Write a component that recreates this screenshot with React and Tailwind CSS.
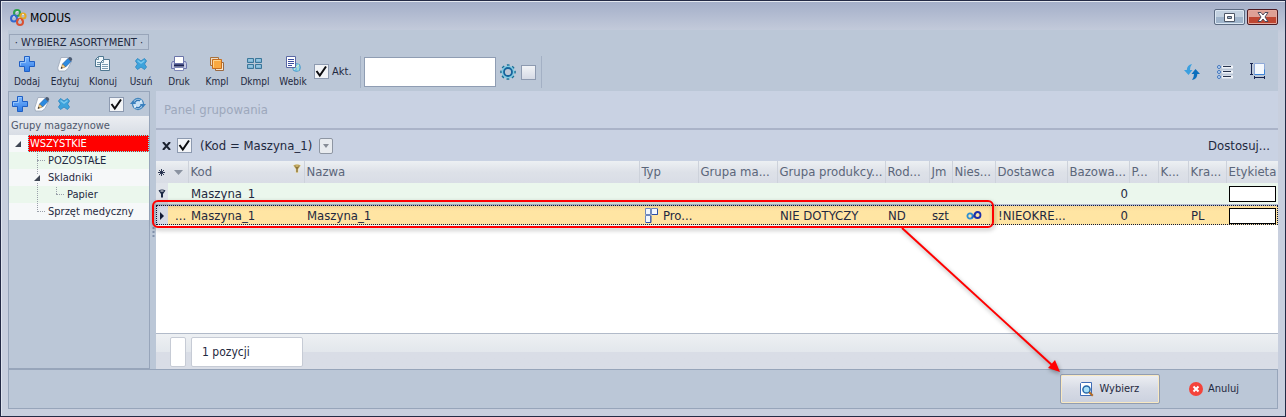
import React from 'react';

const Plus = () => (
  <svg width="16" height="16" viewBox="0 0 16 16" aria-hidden="true">
    <defs>
      <linearGradient id="plusFill" x1="0" y1="0" x2="0" y2="1">
        <stop offset="0" stopColor="#7db8ff" />
        <stop offset="1" stopColor="#2f7be6" />
      </linearGradient>
    </defs>
    <path d="M5.500.5h5v5h5v5h-5v5h-5v-5h-5v-5h5z" fill="url(#plusFill)" stroke="#1f5fc4" />
    <path d="M6.500 6.500v-5h3M1.500 9.500v-3h5" fill="none" stroke="#a5d0ff" opacity=".8" />
  </svg>
);

const Edit = () => (
  <svg width="16" height="16" viewBox="0 0 16 16" aria-hidden="true">
    <path d="M4 1.500h8l2 5-3 6-3 2.500H1.500L.7 12z" fill="#fcfdfe" stroke="#9aa6b8" strokeWidth=".8" />
    <path d="M5.500 8 11 2.500 14 5.500 8.500 11z" fill="#2c8be0" stroke="#1c5ba8" strokeWidth=".7" />
    <path d="m11 2.500 1.500-1.500q2-.3 2.800 2.300L14 5.500z" fill="#4a5a72" />
    <path d="m5.500 8-1.500 4.500 4.500-1.500z" fill="#ffd98a" stroke="#7a5a34" strokeWidth=".5" />
    <path d="m4.500 10.800-.7 2 2-.7z" fill="#222" />
  </svg>
);

const Clone = () => (
  <svg width="16" height="16" viewBox="0 0 16 16" aria-hidden="true">
    <path d="M3.500.5h5v10h-8v-7z" fill="#eff7fb" stroke="#4f7791" />
    <path d="M3.500.5v3h-3M2 6.500h4M2 8.500h3" fill="none" stroke="#4f7791" strokeWidth=".8" />
    <path d="M8.500 3.500h6v11h-9v-8z" fill="#f4fafc" stroke="#4f7791" />
    <path d="M8.500 3.500v3h-3M7 8.500h6M7 10.500h6M7 12.500h6" fill="none" stroke="#6c91a8" strokeWidth=".9" />
  </svg>
);

const Cross = () => (
  <svg width="14" height="14" viewBox="0 0 14 14" aria-hidden="true">
    <path d="M3.500 1.500 7 4l3.500-2.500 2 2.500-2 3 2 3-2 2.500L7 10l-3.500 2.500-2-2.500 2-3-2-3z" fill="#3da3dc" stroke="#3a8fc6" strokeLinejoin="round" />
    <path d="M3.500 3.500 7 6l3.500-2.500" fill="none" stroke="#7cc9ee" strokeWidth="1.500" />
  </svg>
);

const Printer = () => (
  <svg width="16" height="16" viewBox="0 0 16 16" aria-hidden="true">
    <path d="M3.500.5h9v7h-9z" fill="#fff" stroke="#6b74a8" />
    <path d="M1.500 5.500h2v3h9v-3h2l1 2v5h-15v-5z" fill="#c5cae4" stroke="#6c75ad" />
    <path d="M3 8.500h10v2H3z" fill="#1c2454" />
    <path d="M3.500 11.500h9v3h-9z" fill="#fff" stroke="#7f88b8" />
  </svg>
);

const Stack = () => (
  <svg width="16" height="16" viewBox="0 0 16 16" aria-hidden="true">
    <path d="M1.500 1.500h8v8h-8z" fill="#e9dccb" stroke="#a8713c" />
    <path d="M6.500 6.500h8v8h-8z" fill="#f6e6cf" stroke="#9a6a43" />
    <path d="M3.500 3.500h9v9h-9z" fill="#f9a941" stroke="#c66d1d" />
    <path d="M4.500 11.500v-7h7" fill="none" stroke="#ffd48d" />
  </svg>
);

const Tiles = () => (
  <svg width="16" height="16" viewBox="0 0 16 16" aria-hidden="true">
    <g fill="#7eb4d4" stroke="#3a7699">
      <path d="M.5 2.500h6v4h-6zM8.500 2.500h6v4h-6zM.5 8.500h6v4h-6zM8.500 8.500h6v4h-6z" />
    </g>
    <path d="M1.500 4h4M9.500 4h4M1.500 10h4M9.500 10h4" stroke="#a9d4ea" />
  </svg>
);

const WebDoc = () => (
  <svg width="16" height="16" viewBox="0 0 16 16" aria-hidden="true">
    <circle cx="11.500" cy="11.500" r="4" fill="#72c3e8" stroke="#3b8cc0" strokeWidth=".6" />
    <path d="M9 14q1-3 5-5M13 8.500v6" stroke="#d9f2c8" fill="none" />
    <path d="M1.500.5h9v11h-9z" fill="#fff" stroke="#5a68a4" />
    <path d="M3 3.500h6M3 5.500h6M3 7.500h6M3 9.500h4" stroke="#3c4fa0" />
  </svg>
);

const Gear = () => (
  <svg width="16" height="16" viewBox="0 0 16 16" fill="none" aria-hidden="true">
    <circle cx="8" cy="8" r="7" stroke="#1a7198" strokeWidth="1.600" strokeDasharray="2.700 2.798" strokeDashoffset="1.350" />
    <circle cx="8" cy="8" r="5.500" stroke="#7ccbe4" strokeWidth="1.600" />
    <circle cx="8" cy="8" r="4" stroke="#14639b" strokeWidth="1.800" />
  </svg>
);

const Globe = () => (
  <svg width="16" height="14" viewBox="0 0 16 14" fill="none" aria-hidden="true">
    <circle cx="8" cy="7" r="5.500" fill="#c7e0f5" stroke="#4587bd" strokeWidth="1.300" />
    <path d="M4.500 7a3.500 3.500 0 0 1 6-2.500M11.500 7a3.500 3.500 0 0 1-6 2.500" stroke="#2e74b5" strokeWidth="1.400" />
    <path d="m0 7 3-3.500L6 7zM16 7l-3 3.500L10 7z" fill="#397fbd" />
    <path d="m9 5 2.500.2.200-2.700zM7 9l-2.500-.2-.2 2.700z" fill="#e9f5fd" />
  </svg>
);

const Logo = () => (
  <svg width="17" height="17" viewBox="0 0 17 17" fill="none" aria-hidden="true">
    <circle cx="7" cy="4" r="3" stroke="#2ca24a" strokeWidth="2" />
    <circle cx="13" cy="7" r="2.600" stroke="#e3a824" strokeWidth="2" />
    <circle cx="4" cy="9.500" r="3" stroke="#3268cf" strokeWidth="2" />
    <circle cx="10" cy="13" r="3" stroke="#d95132" strokeWidth="2" />
    <path d="M6 3.500q1-1.500 2.500-.8M3 8q1-.8 2 0M12 5.500q1-.6 2 .2M9 11q1-.6 2 0" stroke="#fff" strokeWidth=".8" />
  </svg>
);

const Refresh = () => (
  <svg width="16" height="16" viewBox="0 0 16 16" aria-hidden="true">
    <path d="M8 0Q3 1 2.800 6H0l4.500 5L8.500 6H6Q6 2.500 8 0z" fill="#3ba0e0" />
    <path d="M8 16q5.500-1 5.300-6H16l-4.500-5-4 5H10q0 3.500-2 6z" fill="#0a6fbd" />
  </svg>
);

const List = () => (
  <svg width="16" height="14" viewBox="0 0 16 14" aria-hidden="true">
    <path d="M5 .5h11v3H5zM5 5.500h11v3H5zM5 10.500h11v3H5z" fill="#eef2f7" />
    <path d="M6 1.500h8M6 6.500h8M6 11.500h8" stroke="#26334d" />
    <g fill="#cfe3f8" stroke="#3f74bd">
      <circle cx="2" cy="2" r="1.500" /><circle cx="2" cy="7" r="1.500" /><circle cx="2" cy="12" r="1.500" />
    </g>
  </svg>
);

const Measure = () => (
  <svg width="16" height="17" viewBox="0 0 16 17" fill="none" aria-hidden="true">
    <path d="M4.500.5h10v11h-10z" fill="#f4f8fd" stroke="#8fa9d8" />
    <path d="M4.500 11.500h10v-5" stroke="#3c83d6" />
    <path d="M0 .5h3M0 11.500h3M1.500 0v12M4.500 13v3M14.500 13v3M4 14.500h11" stroke="#16224d" />
  </svg>
);

const Search = () => (
  <svg width="14" height="15" viewBox="0 0 14 15" aria-hidden="true">
    <path d="M1.500.5h10v13H.5v-12z" fill="#fff" stroke="#3e6cb6" />
    <circle cx="6.500" cy="7.500" r="3.600" fill="#a9e0f8" stroke="#2466a8" strokeWidth="1.500" />
    <path d="m9.300 10.300 3.500 3.500" stroke="#b06a25" strokeWidth="2" />
  </svg>
);

const Cancel = () => (
  <svg width="14" height="14" viewBox="0 0 14 14" aria-hidden="true">
    <circle cx="7" cy="7" r="7" fill="#f4433a" />
    <path d="m4.500 4.500 5 5M9.500 4.500l-5 5" stroke="#fff" strokeWidth="2" />
  </svg>
);

const Pin = ({ gold }) => (
  <svg width="8" height="9" viewBox="0 0 8 9" aria-hidden="true">
    <path d="M.5 1.500Q4-.5 7.500 1.500L5 5v3.500H3V5z" fill={gold ? '#8a743c' : '#1b2744'} stroke={gold ? '#f5dc8c' : 'none'} strokeWidth=".5" />
    <path d="M2.500 2h3" stroke={gold ? '#ffe28a' : '#fff'} />
  </svg>
);

const Asterisk = () => (
  <svg width="7" height="7" viewBox="0 0 7 7" aria-hidden="true">
    <path d="M3.500 0v7M0 3.500h7M1 1l5 5M6 1 1 6" stroke="#1b2744" strokeWidth=".9" />
  </svg>
);

const Boxes = () => (
  <svg width="13" height="15" viewBox="0 0 13 15" className="shrink-0" aria-hidden="true">
    <g fill="#f3f7fd" stroke="#6d87bd">
      <path d="M.5.500h5v6h-5zM6.500.500h6v6h-6zM.5 7.500h5v7h-5z" />
    </g>
    <path d="M1 14.500h5v-7M7 6.500h5.500V1" fill="none" stroke="#2c4fa6" />
  </svg>
);

const Infinity = () => (
  <svg width="16" height="9" viewBox="0 0 16 9" fill="none" aria-hidden="true">
    <circle cx="4" cy="5" r="2.600" stroke="#2d8fd0" strokeWidth="1.800" />
    <path d="m6 7 4-5" stroke="#2464c0" strokeWidth="1.800" />
    <circle cx="11.500" cy="4" r="3" stroke="#1d2ea8" strokeWidth="1.800" />
  </svg>
);

const Check = ({ label, checked = false }) => (
  <span className="relative block h-[15px] w-[15px] shrink-0">
    <input
      type="checkbox"
      aria-label={label}
      defaultChecked={checked}
      className="peer block h-[15px] w-[15px] appearance-none border border-[#8d9ab0] bg-gradient-to-b from-[#f2f4f7] to-[#d5dae5] checked:to-[#f2f4f7]"
    />
    <svg className="pointer-events-none absolute inset-0 hidden peer-checked:block" width="15" height="15" viewBox="0 0 15 15" aria-hidden="true">
      <path d="M2.500 7 5.800 11.500 12 2.500" fill="none" stroke="#0c0d10" strokeWidth="2" />
    </svg>
  </span>
);

const tools = [
  ['Dodaj', Plus], ['Edytuj', Edit], ['Klonuj', Clone], ['Usuń', Cross],
  ['Druk', Printer], ['Kmpl', Stack], ['Dkmpl', Tiles], ['Webik', WebDoc],
];

const Arrow = () => (
  <svg width="6" height="6" viewBox="0 0 6 6" className="shrink-0" aria-hidden="true">
    <path d="M6 0v6H0z" fill="#3f4654" />
  </svg>
);

const tree = [
  { name: 'WSZYSTKIE', pad: 'pl-[6px]', open: true, selected: true },
  { name: 'POZOSTAŁE', pad: 'pl-[28px]' },
  { name: 'Skladniki', pad: 'pl-[25px]', open: true },
  { name: 'Papier', pad: 'pl-[47px]' },
  { name: 'Sprzęt medyczny', pad: 'pl-[28px]' },
];

const columns = [
  ['Kod', 'w-[116px]'], ['Nazwa', ''], ['Typ', 'w-[59px]'], ['Grupa ma...', 'w-[79px]'],
  ['Grupa produkcy...', 'w-[108px]'], ['Rod...', 'w-[44px]'], ['Jm', 'w-[23px]'], ['Nies...', 'w-[43px]'],
  ['Dostawca', 'w-[72px]'], ['Bazowa...', 'w-[62px]'], ['P...', 'w-[29px]'], ['K...', 'w-[30px]'],
  ['Kra...', 'w-[38px]'], ['Etykieta', 'w-[52px]'],
];

const cell = 'whitespace-nowrap p-0 pl-[3px]';

const Label = () => (
  <td className="p-0 pl-[3px] pr-[2px]"><div className="h-4 border border-black bg-white" /></td>
);

export default function App() {
  return (
    <div className="relative flex min-h-screen flex-col border border-[#232a45] bg-[#c8cfde] bg-gradient-to-b from-[#a3aec8] from-0% via-[#c6cddc] via-[32px] to-[#c8cfde] to-[90px] px-[7px] pb-[7px] font-['DejaVu_Sans_Condensed','Noto_Sans',sans-serif] text-[11px] leading-[14px] text-[#1f2940] shadow-[inset_0_1px_0_0_#e4e8f0,inset_1px_0_0_0_#dfe4ee]">
      <header className="flex h-[29px] shrink-0 items-center pt-1">
        <span className="pl-[2px]"><Logo /></span>
        <h1 className="flex-1 pl-[3px] text-[12px] text-black">MODUS</h1>
        <div className="flex gap-[2px] pb-[1px]">
          <button aria-label="Maksymalizuj" className="grid h-4 w-[31px] place-items-center rounded-[2px] border border-[#5d6b82] bg-gradient-to-b from-[#c3d1e0] from-50% to-[#a0b4cb] to-50% shadow-[inset_0_0_0_1px_#dce7f2]">
            <svg width="11" height="9" viewBox="0 0 11 9" aria-hidden="true">
              <path d="M.5.500h10v8H.5z" fill="#fff" stroke="#4d5666" /><path d="M3.500 3.500h4v2h-4z" fill="#9bb0c7" stroke="#4d5666" />
            </svg>
          </button>
          <button aria-label="Zamknij" className="grid h-4 w-[31px] place-items-center rounded-[2px] border border-[#4e1c24] bg-gradient-to-b from-[#dea095] from-50% to-[#bf4632] to-50% shadow-[inset_0_0_0_1px_#e5a89d]">
            <svg width="12" height="10" viewBox="0 0 12 10" aria-hidden="true">
              <path d="m1 .5h3l2 2.500 2-2.500h3L8 5l3 4.500H8L6 7 4 9.500H1L4 5z" fill="#fff" stroke="#4d4a5b" />
            </svg>
          </button>
        </div>
      </header>

      <section className="flex h-[61px] shrink-0 flex-col bg-[#bbc7d7]">
        <div className="flex pl-[1px] pt-[4px]">
          <h2 className="flex h-4 w-[140px] items-center justify-center whitespace-nowrap border border-[#98a5b9] pt-[2px] text-[11px]">· WYBIERZ ASORTYMENT ·</h2>
        </div>
        <div className="flex flex-1 items-start">
          {tools.map(([name, Icon]) => (
            <button key={name} className="flex w-[38px] shrink-0 flex-col items-center gap-[3px] pt-[6px] text-[10px] leading-[14px]">
              <span className="grid h-4 w-4 place-items-center"><Icon /></span>
              {name}
            </button>
          ))}
          <div className="flex h-8 items-center pl-[2px] pt-[11px]">
            <Check label="Akt." checked />
            <span className="w-[31px] pl-[3px] text-[11px]">Akt.</span>
          </div>
          <div className="mt-[6px] flex h-8 items-center border-x border-[#a3b0c4] pl-[3px] pr-[5px]">
            <input aria-label="Szukaj" className="h-[30px] w-[132px] border border-[#8f9db3] bg-white px-1 outline-none" />
            <button aria-label="Ustawienia" className="pl-[4px] pr-[5px]"><Gear /></button>
            <Check label="Dokładnie" />
          </div>
          <div className="ml-auto flex items-center gap-[17px] pr-3 pt-[13px]">
            <button aria-label="Odśwież"><Refresh /></button>
            <button aria-label="Lista"><List /></button>
            <button aria-label="Wymiary"><Measure /></button>
          </div>
        </div>
      </section>

      <main className="flex flex-1 bg-[#bbc7d7]">
        <aside className="w-[142px] shrink-0 border border-[#97a5ba]">
          <div className="flex h-6 items-center gap-[6px] pl-[3px] pr-[3px]">
            <button aria-label="Dodaj grupę"><Plus /></button>
            <button aria-label="Edytuj grupę"><Edit /></button>
            <button aria-label="Usuń grupę" className="pl-[1px]"><Cross /></button>
            <span className="ml-auto"><Check label="Aktywne grupy" checked /></span>
            <button aria-label="Odśwież grupy"><Globe /></button>
          </div>
          <h3 className="flex h-[19px] items-center bg-gradient-to-b from-[#eceef2] to-[#d8dde5] pl-[2px] text-[#4e576b]">Grupy magazynowe</h3>
          <ul className="relative">
            {tree.map((node, i) => (
              <li key={node.name} className={`flex h-[17px] items-center ${node.pad} ${i % 2 ? 'bg-[#ebf7ed]' : 'bg-[#f6f8f9]'}`}>
                {node.open ? <Arrow /> : <span className="w-[8px] border-t border-dotted border-[#9aa0aa]" />}
                <span className={node.selected ? 'ml-[7px] flex h-[17px] flex-1 items-center border border-dotted border-[#6ff] bg-[#f00] pl-[1px] text-white' : node.open ? 'pl-[8px]' : 'pl-[3px]'}>
                  {node.name}
                </span>
              </li>
            ))}
            <svg className="pointer-events-none absolute left-0 top-0" width="60" height="85" aria-hidden="true">
              <path d="M28.500 18v22M28.500 48v28M47.500 52v7" stroke="#9aa0aa" strokeDasharray="1 1" fill="none" />
            </svg>
          </ul>
        </aside>
        <div className="flex w-[6px] shrink-0 items-center justify-center">
          <svg width="3" height="14" viewBox="0 0 3 14" aria-hidden="true"><path d="M1.500 0v14" stroke="#8192ac" strokeWidth="2" strokeDasharray="2 2" /></svg>
        </div>

        <section className="flex min-w-0 flex-1 flex-col bg-white text-[13px]">
          <div className="flex h-[39px] items-center border-b-2 border-[#aab3c8] bg-[#c9d2e3] pl-2 text-[#9da8bc]">Panel grupowania</div>
          <div className="flex h-[31px] items-center bg-[#c9d2e3] pl-[6px] pr-[8px]">
            <button aria-label="Usuń filtr">
              <svg width="9" height="8" viewBox="0 0 9 8" aria-hidden="true"><path d="m1 0 7 8M8 0 1 8" stroke="#1b2230" strokeWidth="2" /></svg>
            </button>
            <span className="pl-[6px]"><Check label="Filtr aktywny" checked /></span>
            <span className="pl-[8px]">(Kod = Maszyna_1)</span>
            <button aria-label="Ostatnie filtry" className="ml-[7px] grid h-4 w-[14px] place-items-center rounded-[2px] border border-[#8e96a3] bg-[#e8ebef]">
              <svg width="6" height="4" viewBox="0 0 6 4" aria-hidden="true"><path d="M0 0h6L3 4z" fill="#878c96" /></svg>
            </button>
            <button className="ml-auto">Dostosuj...</button>
          </div>

          <table className="w-full table-fixed border-collapse leading-[16px]">
            <thead>
              <tr className="h-[22px] bg-gradient-to-b from-[#edf0f3] from-0% via-[#dde1e8] via-50% to-[#d9dde6] text-left text-[#5b667a]">
                <th className="w-[12px] p-0 pl-[2px]"><Asterisk /></th>
                <th className="w-[20px] p-0 pl-[6px]">
                  <svg width="9" height="5" viewBox="0 0 9 5" aria-hidden="true"><path d="M0 0h9L4.500 5z" fill="#8b93a1" /></svg>
                </th>
                {columns.map(([name, width]) => (
                  <th key={name} scope="col" className={`${width} whitespace-nowrap border-l border-[#cdd2db] p-0 pl-[2px] font-normal`}>
                    {name === 'Kod' ? (
                      <span className="flex justify-between pr-[3px]">Kod<Pin gold /></span>
                    ) : name}
                  </th>
                ))}
              </tr>
            </thead>
            <tbody>
              <tr className="h-[22px] border-b-2 border-[#b6bfd0] bg-[#ebf7ed]">
                <td className="bg-[#dfe3ea] p-0 pl-[2px]"><Pin /></td>
                <td className="p-0" />
                <td className={cell}>Maszyna_1</td>
                <td colSpan={8} className="p-0" />
                <td className="p-0 pr-[1px] text-right">0</td>
                <td colSpan={3} className="p-0" />
                <Label />
              </tr>
              <tr className="h-[20px] bg-gradient-to-b from-[#f7d896] to-[#ffe5a3] to-30% outline-1 -outline-offset-1 outline-dotted outline-[#111a3c]">
                <td className="bg-[#d5dae6] p-0 pl-[4px]">
                  <svg width="5" height="8" viewBox="0 0 5 8" aria-hidden="true"><path d="M0 0v8l4-4z" fill="#101a36" /></svg>
                </td>
                <td className="p-0 pl-[7px]">...</td>
                <td className={cell}>Maszyna_1</td>
                <td className={cell}>Maszyna_1</td>
                <td className="p-0 pl-[6px]"><span className="flex items-center gap-[5px]"><Boxes />Pro...</span></td>
                <td className={cell} />
                <td className={cell}>NIE DOTYCZY</td>
                <td className={cell}>ND</td>
                <td className={cell}>szt</td>
                <td className="p-0 pl-[14px]"><Infinity /></td>
                <td className={cell}>!NIEOKRE...</td>
                <td className="p-0 pr-[1px] text-right">0</td>
                <td className={cell} />
                <td className={cell} />
                <td className={cell}>PL</td>
                <Label />
              </tr>
            </tbody>
          </table>

          <footer className="mt-auto flex h-9 items-center gap-[5px] border-t border-[#b1bac9] bg-gradient-to-b from-[#edf0f3] from-0% via-[#e3e7ec] via-50% to-[#d9dde6] to-50% pl-[14px] text-[12px]">
            <span className="h-[30px] w-[16px] rounded-[2px] border border-[#c6cbd5] bg-white" />
            <span className="flex h-[30px] w-[112px] items-center rounded-[2px] border border-[#c6cbd5] bg-white pl-[10px]">1 pozycji</span>
          </footer>
        </section>
      </main>

      <div className="flex h-10 shrink-0 items-center justify-end border border-[#97a5ba] bg-[#bbc7d7] pr-[38px]">
        <button className="flex h-[30px] w-[100px] items-center justify-center gap-[5px] rounded-[2px] border border-[#929db1] bg-gradient-to-b from-[#edeff3] from-0% via-[#d7dbe5] via-50% to-[#cbd1df] shadow-[inset_0_0_0_1px_#f9e9c1]">
          <Search />Wybierz
        </button>
        <button className="ml-[29px] flex items-center gap-[5px]"><Cancel />Anuluj</button>
      </div>

      <svg className="pointer-events-none absolute left-0 top-0 drop-shadow-[1px_2px_2px_rgba(0,0,0,0.35)]" width="1100" height="390" viewBox="1 1 1100 390" fill="none" aria-hidden="true">
        <rect x="153" y="201" width="840" height="26" rx="5" stroke="#f00" strokeWidth="2" />
        <path d="M902 228 1053 366" stroke="#f00" strokeWidth="2" />
        <path d="m1060 372-12-4 7-8z" fill="#f00" />
      </svg>
    </div>
  );
}
